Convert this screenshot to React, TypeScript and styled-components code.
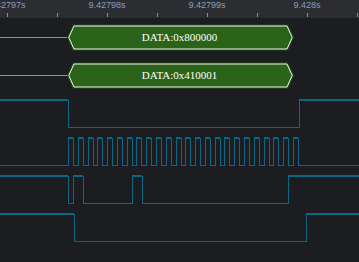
import React from 'react';
import styled, { createGlobalStyle } from 'styled-components';

const GlobalStyle = createGlobalStyle`
  html, body {
    margin: 0;
    padding: 0;
    background: #1c1d20;
  }
`;

const WIDTH = 359;
const ROW_H = 38;
const SIGNAL = '#0a6884';

const Screen = styled.div`
  width: ${WIDTH}px;
  height: 262px;
  overflow: hidden;
  background: #1c1d20;
  font-family: 'Liberation Sans', Arial, sans-serif;
`;

// ---- time ruler ----
const Ruler = styled.div`
  height: 18px;
  background: #2b2d31;
  overflow: hidden;
`;

const TickStrip = styled.div`
  display: flex;
  margin-left: -18px;
  height: 100%;
`;

const TickCell = styled.div`
  flex: 0 0 50px;
  display: flex;
  flex-direction: column;
  align-items: center;
  justify-content: space-between;
  height: 100%;
`;

const TickLabel = styled.span`
  font-size: 9px;
  line-height: 10px;
  color: #8a9cc2;
  white-space: nowrap;
`;

const TickMark = styled.div`
  width: 1px;
  height: 4px;
  background: #8a8c91;
  margin-bottom: 1px;
`;

// ---- decoded protocol rows ----
const DecodeRow = styled.div`
  height: ${ROW_H}px;
  display: flex;
  align-items: center;
`;

const LeadLine = styled.div`
  width: 68px;
  height: 1px;
  background: #35d235;
`;

const Frame = styled.div`
  position: relative;
  width: 228px;
  height: 27px;
  margin-left: -1px;
  display: flex;
  align-items: center;
  justify-content: center;
`;

const FrameShape = styled.svg`
  position: absolute;
  inset: 0;
`;

const FrameText = styled.span`
  position: relative;
  font-family: 'Liberation Serif', 'Times New Roman', serif;
  font-size: 11px;
  color: #ffffff;
  padding-right: 3px;
  margin-top: -1px;
`;

const FrameBox: React.FC<{ text: string }> = ({ text }) => (
  <Frame>
    <FrameShape width="228" height="27" viewBox="0 0 228 27">
      <polygon points="0,13.5 6,0.5 221,0.5 227,13.5 221,26.5 6,26.5" fill="#1f4f14" />
      <polygon points="1.8,13.5 7,2 220,2 225.2,13.5 220,25 7,25" fill="#2b6418" stroke="#f2f2f2" strokeWidth="1" />
    </FrameShape>
    <FrameText>{text}</FrameText>
  </Frame>
);

// ---- digital signal rows ----
const SignalRow = styled.div`
  height: ${ROW_H}px;
`;

const HI = 6;
const LO = 33;

// edges: x positions where the level toggles, starting at `startHigh`
const Wave: React.FC<{ startHigh: boolean; edges: number[] }> = ({ startHigh, edges }) => {
  const xs = [0, ...edges, WIDTH];
  const segs: { x1: number; x2: number; high: boolean }[] = [];
  let high = startHigh;
  for (let i = 0; i < xs.length - 1; i++) {
    segs.push({ x1: xs[i], x2: xs[i + 1], high });
    high = !high;
  }
  return (
    <svg width={WIDTH} height={ROW_H} style={{ display: 'block' }}>
      {segs.map((s, i) => (
        <line
          key={'h' + i}
          x1={s.x1}
          x2={s.x2}
          y1={s.high ? HI : LO + 0.5}
          y2={s.high ? HI : LO + 0.5}
          stroke={SIGNAL}
          strokeWidth={s.high ? 2 : 1}
        />
      ))}
      {edges.map((x, i) => (
        <line key={'v' + i} x1={x + 0.5} x2={x + 0.5} y1={HI} y2={LO + 1} stroke={SIGNAL} strokeWidth={1} />
      ))}
    </svg>
  );
};

const clockEdges: number[] = [];
for (let i = 0; i < 24; i++) {
  const x = Math.round(68 + i * 9.78);
  clockEdges.push(x, x + 5);
}

const ticks = [
  { label: '9.42797s' },
  { label: '' },
  { label: '9.42798s' },
  { label: '' },
  { label: '9.42799s' },
  { label: '' },
  { label: '9.428s' },
  { label: '' },
];

const App: React.FC = () => (
  <>
    <GlobalStyle />
    <Screen>
      <Ruler>
        <TickStrip>
          {ticks.map((t, i) => (
            <TickCell key={i}>
              <TickLabel>{t.label || '\u00a0'}</TickLabel>
              <TickMark />
            </TickCell>
          ))}
        </TickStrip>
      </Ruler>

      <DecodeRow>
        <LeadLine />
        <FrameBox text="DATA:0x800000" />
      </DecodeRow>
      <DecodeRow>
        <LeadLine />
        <FrameBox text="DATA:0x410001" />
      </DecodeRow>

      <SignalRow>
        <Wave startHigh edges={[68, 299]} />
      </SignalRow>
      <SignalRow>
        <Wave startHigh={false} edges={clockEdges} />
      </SignalRow>
      <SignalRow>
        <Wave startHigh edges={[68, 73, 83, 132, 142, 288]} />
      </SignalRow>
      <SignalRow>
        <Wave startHigh edges={[74, 306]} />
      </SignalRow>
    </Screen>
  </>
);

export default App;
